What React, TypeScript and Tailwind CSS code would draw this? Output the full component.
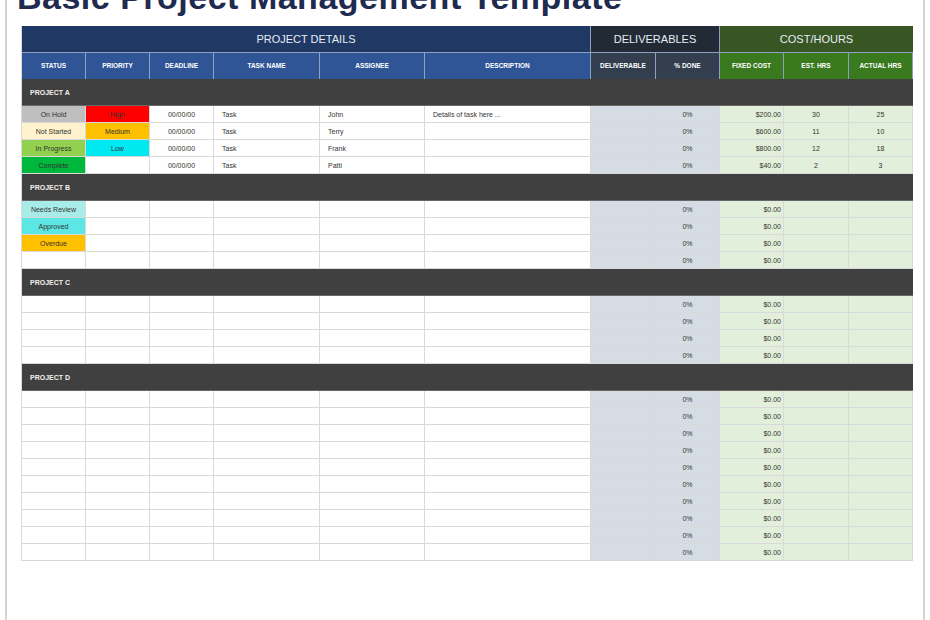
const cols = 'grid grid-cols-[64px_64px_64px_106px_105px_166px_65px_64px_64px_65px_64px]';
const font = { fontFamily: '"Liberation Sans", Arial, sans-serif' };

type Row = {
  status?: [string, string];
  priority?: [string, string];
  deadline?: string;
  task?: string;
  who?: string;
  desc?: string;
  cost: string;
  est?: string;
  act?: string;
};

const projects: { name: string; rows: Row[] }[] = [
  {
    name: 'PROJECT A',
    rows: [
      { status: ['On Hold', 'bg-[#bfbfbf]'], priority: ['High', 'bg-[#ff0000]'], deadline: '00/00/00', task: 'Task', who: 'John', desc: 'Details of task here ...', cost: '$200.00', est: '30', act: '25' },
      { status: ['Not Started', 'bg-[#fff2cc]'], priority: ['Medium', 'bg-[#ffc000]'], deadline: '00/00/00', task: 'Task', who: 'Terry', cost: '$600.00', est: '11', act: '10' },
      { status: ['In Progress', 'bg-[#92d050]'], priority: ['Low', 'bg-[#00e8f0]'], deadline: '00/00/00', task: 'Task', who: 'Frank', cost: '$800.00', est: '12', act: '18' },
      { status: ['Complete', 'bg-[#00b83c]'], deadline: '00/00/00', task: 'Task', who: 'Patti', cost: '$40.00', est: '2', act: '3' },
    ],
  },
  {
    name: 'PROJECT B',
    rows: [
      { status: ['Needs Review', 'bg-[#a8ece8]'], cost: '$0.00' },
      { status: ['Approved', 'bg-[#5ce6e4]'], cost: '$0.00' },
      { status: ['Overdue', 'bg-[#ffc000]'], cost: '$0.00' },
      { cost: '$0.00' },
    ],
  },
  { name: 'PROJECT C', rows: Array.from({ length: 4 }, () => ({ cost: '$0.00' })) },
  { name: 'PROJECT D', rows: Array.from({ length: 10 }, () => ({ cost: '$0.00' })) },
];

const cell = 'h-[17px] border-r border-b border-[#d9d9d9] text-[7px] leading-[17px] text-[#333] truncate';

function DataRow({ r }: { r: Row }) {
  return (
    <div className={cols}>
      <div className={`${cell} text-center ${r.status ? r.status[1] : 'bg-white'}`}>{r.status?.[0]}</div>
      <div className={`${cell} text-center ${r.priority ? r.priority[1] : 'bg-white'}`}>{r.priority?.[0]}</div>
      <div className={`${cell} text-center bg-white`}>{r.deadline}</div>
      <div className={`${cell} bg-white pl-2`}>{r.task}</div>
      <div className={`${cell} bg-white pl-2`}>{r.who}</div>
      <div className={`${cell} bg-white pl-2`}>{r.desc}</div>
      <div className={`${cell} bg-[#d6dce4]`} />
      <div className={`${cell} bg-[#d6dce4] text-center`}>0%</div>
      <div className={`${cell} bg-[#e2efda] text-right pr-0.5`}>{r.cost}</div>
      <div className={`${cell} bg-[#e2efda] text-center`}>{r.est}</div>
      <div className={`${cell} bg-[#e2efda] text-center`}>{r.act}</div>
    </div>
  );
}

export default function App() {
  const heads: [string, string][] = [
    ['STATUS', 'bg-[#2f5597]'], ['PRIORITY', 'bg-[#2f5597]'], ['DEADLINE', 'bg-[#2f5597]'], ['TASK NAME', 'bg-[#2f5597]'],
    ['ASSIGNEE', 'bg-[#2f5597]'], ['DESCRIPTION', 'bg-[#2f5597]'], ['DELIVERABLE', 'bg-[#333f4f]'], ['% DONE', 'bg-[#333f4f]'],
    ['FIXED COST', 'bg-[#3a7a1f]'], ['EST. HRS', 'bg-[#3a7a1f]'], ['ACTUAL HRS', 'bg-[#3a7a1f]'],
  ];
  return (
    <div className="h-[620px] w-[930px] overflow-hidden bg-white" style={font}>
      <div className="mx-[5px] h-[640px] border-x-2 border-[#d4d4d4] overflow-hidden">
        <h1 className="-mt-[22px] ml-[10px] text-[34px] font-bold leading-[38px] tracking-[0.5px] text-[#1f2a4f] whitespace-nowrap">
          Basic Project Management Template
        </h1>
        <div className="ml-[14px] mt-[10px] w-[892px] border-l border-[#d9d9d9]">
          <div className="flex h-[26px] text-[11px] text-[#e8ecf4]">
            <div className="flex w-[569px] items-center justify-center bg-[#203864] border-r border-[#8ea0c0]">PROJECT DETAILS</div>
            <div className="flex w-[129px] items-center justify-center bg-[#222b35] border-r border-[#8ea0c0]">DELIVERABLES</div>
            <div className="flex w-[193px] items-center justify-center bg-[#375623]">COST/HOURS</div>
          </div>
          <div className={cols}>
            {heads.map(([h, bg]) => (
              <div key={h} className={`h-[27px] ${bg} border-r border-t border-[#8ea0c0] flex items-center justify-center text-[6.5px] font-bold text-white`}>{h}</div>
            ))}
          </div>
          {projects.map((p) => (
            <div key={p.name}>
              <div className="h-[27px] bg-[#404040] pl-2 text-[7px] font-bold leading-[27px] text-[#f0f0f0] border-b border-[#666]">{p.name}</div>
              {p.rows.map((r, i) => <DataRow key={i} r={r} />)}
            </div>
          ))}
        </div>
      </div>
    </div>
  );
}
